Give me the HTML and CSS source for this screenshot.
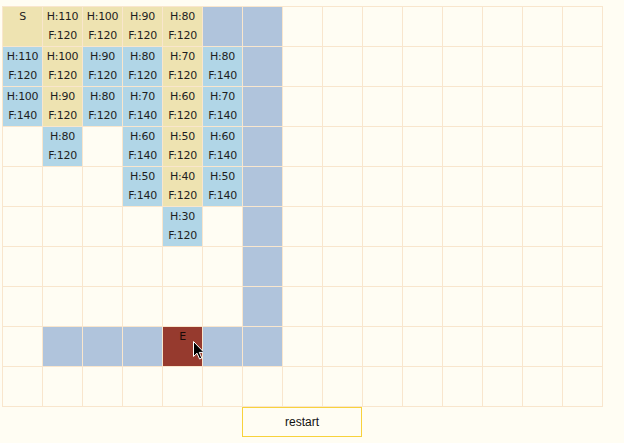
FILE: index.html
```html
<!DOCTYPE html>
<html>
<head>
<meta charset="utf-8">
<link rel="stylesheet" href="styles.css">
</head>
<body>
<div class="page">
  <div class="board">
    <div class="cell open">S</div>
    <div class="cell open">H:110<br>F:120</div>
    <div class="cell open">H:100<br>F:120</div>
    <div class="cell open">H:90<br>F:120</div>
    <div class="cell open">H:80<br>F:120</div>
    <div class="cell path"></div>
    <div class="cell path"></div>
    <div class="cell"></div><div class="cell"></div><div class="cell"></div><div class="cell"></div><div class="cell"></div><div class="cell"></div><div class="cell"></div><div class="cell"></div>

    <div class="cell closed">H:110<br>F:120</div>
    <div class="cell open">H:100<br>F:120</div>
    <div class="cell closed">H:90<br>F:120</div>
    <div class="cell closed">H:80<br>F:120</div>
    <div class="cell open">H:70<br>F:120</div>
    <div class="cell closed">H:80<br>F:140</div>
    <div class="cell path"></div>
    <div class="cell"></div><div class="cell"></div><div class="cell"></div><div class="cell"></div><div class="cell"></div><div class="cell"></div><div class="cell"></div><div class="cell"></div>

    <div class="cell closed">H:100<br>F:140</div>
    <div class="cell open">H:90<br>F:120</div>
    <div class="cell closed">H:80<br>F:120</div>
    <div class="cell closed">H:70<br>F:140</div>
    <div class="cell open">H:60<br>F:120</div>
    <div class="cell closed">H:70<br>F:140</div>
    <div class="cell path"></div>
    <div class="cell"></div><div class="cell"></div><div class="cell"></div><div class="cell"></div><div class="cell"></div><div class="cell"></div><div class="cell"></div><div class="cell"></div>

    <div class="cell"></div>
    <div class="cell closed">H:80<br>F:120</div>
    <div class="cell"></div>
    <div class="cell closed">H:60<br>F:140</div>
    <div class="cell open">H:50<br>F:120</div>
    <div class="cell closed">H:60<br>F:140</div>
    <div class="cell path"></div>
    <div class="cell"></div><div class="cell"></div><div class="cell"></div><div class="cell"></div><div class="cell"></div><div class="cell"></div><div class="cell"></div><div class="cell"></div>

    <div class="cell"></div>
    <div class="cell"></div>
    <div class="cell"></div>
    <div class="cell closed">H:50<br>F:140</div>
    <div class="cell open">H:40<br>F:120</div>
    <div class="cell closed">H:50<br>F:140</div>
    <div class="cell path"></div>
    <div class="cell"></div><div class="cell"></div><div class="cell"></div><div class="cell"></div><div class="cell"></div><div class="cell"></div><div class="cell"></div><div class="cell"></div>

    <div class="cell"></div><div class="cell"></div><div class="cell"></div><div class="cell"></div>
    <div class="cell closed">H:30<br>F:120</div>
    <div class="cell"></div>
    <div class="cell path"></div>
    <div class="cell"></div><div class="cell"></div><div class="cell"></div><div class="cell"></div><div class="cell"></div><div class="cell"></div><div class="cell"></div><div class="cell"></div>

    <div class="cell"></div><div class="cell"></div><div class="cell"></div><div class="cell"></div><div class="cell"></div><div class="cell"></div>
    <div class="cell path"></div>
    <div class="cell"></div><div class="cell"></div><div class="cell"></div><div class="cell"></div><div class="cell"></div><div class="cell"></div><div class="cell"></div><div class="cell"></div>

    <div class="cell"></div><div class="cell"></div><div class="cell"></div><div class="cell"></div><div class="cell"></div><div class="cell"></div>
    <div class="cell path"></div>
    <div class="cell"></div><div class="cell"></div><div class="cell"></div><div class="cell"></div><div class="cell"></div><div class="cell"></div><div class="cell"></div><div class="cell"></div>

    <div class="cell"></div>
    <div class="cell path"></div>
    <div class="cell path"></div>
    <div class="cell path"></div>
    <div class="cell end">E
      <svg class="cursor" width="12" height="19" viewBox="0 0 12 19"><path d="M0.5 0.5 L0.5 15.5 L4 12.2 L6.6 18 L8.8 17 L6.3 11.4 L11 11.4 Z" fill="#000" stroke="#fff" stroke-width="1"/></svg>
    </div>
    <div class="cell path"></div>
    <div class="cell path"></div>
    <div class="cell"></div><div class="cell"></div><div class="cell"></div><div class="cell"></div><div class="cell"></div><div class="cell"></div><div class="cell"></div><div class="cell"></div>

    <div class="cell"></div><div class="cell"></div><div class="cell"></div><div class="cell"></div><div class="cell"></div><div class="cell"></div><div class="cell"></div><div class="cell"></div><div class="cell"></div><div class="cell"></div><div class="cell"></div><div class="cell"></div><div class="cell"></div><div class="cell"></div><div class="cell"></div>
  </div>
  <div class="controls">
    <button class="restart">restart</button>
  </div>
</div>
</body>
</html>
```

FILE: styles.css
```css
html, body {
  margin: 0;
  padding: 0;
  background: #fffdf3;
}
.page {
  padding: 6px 0 0 2px;
  width: 601px;
}
.board {
  display: grid;
  grid-template-columns: repeat(15, 40px);
  grid-auto-rows: 40px;
  width: 601px;
  border-left: 1px solid #f9e6cd;
  border-top: 1px solid #f9e6cd;
  box-sizing: border-box;
}
.cell {
  box-sizing: border-box;
  border-right: 1px solid #f9e6cd;
  border-bottom: 1px solid #f9e6cd;
  font-family: "DejaVu Sans", sans-serif;
  font-size: 11px;
  letter-spacing: -0.3px;
  line-height: 19px;
  text-align: center;
  color: #1e1e1e;
  padding-top: 0;
  position: relative;
}
.open { background: #eee3b1; }
.closed { background: #b1d6e7; }
.path { background: #b0c4dc; }
.end { background: #963a2e; color: #1a0a08; }
.cursor {
  position: absolute;
  left: 30px;
  top: 14px;
}
.controls {
  display: flex;
  padding-left: 240px;
}
.restart {
  width: 120px;
  height: 30px;
  margin: 0;
  border: 1px solid #f8d23c;
  background: transparent;
  font-family: "Liberation Sans", Arial, sans-serif;
  font-size: 12px;
  color: #111;
  padding: 0;
}
```
